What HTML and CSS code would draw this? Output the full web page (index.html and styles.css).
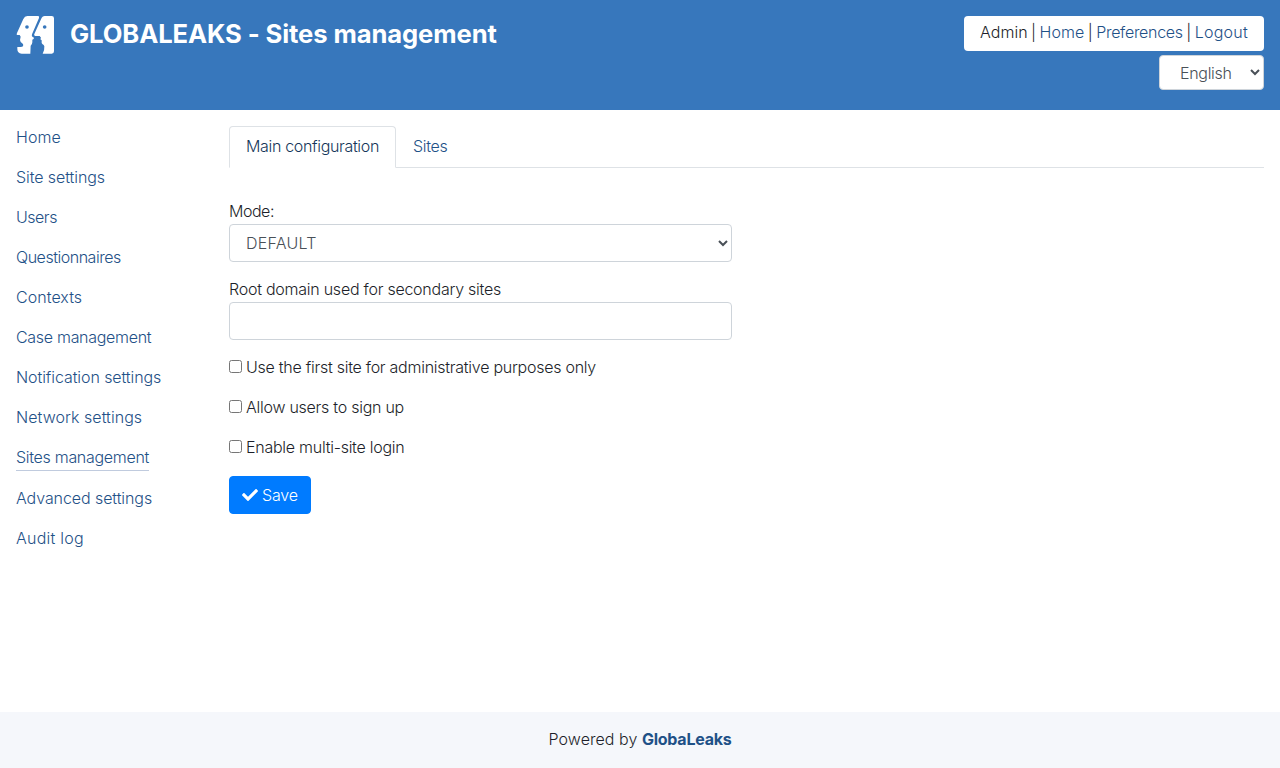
FILE: index.html
```html
<!DOCTYPE html>
<html lang="en">
<head>
<meta charset="utf-8">
<title>GLOBALEAKS - Sites management</title>
<link rel="stylesheet" href="styles.css">
</head>
<body>
<header class="header">
  <svg class="logo" viewBox="0 0 114 114" aria-hidden="true">
    <path fill="#fff" d="M34 0H66Q71 0 69 6L48 55Q46 61 50 63L54 65Q54 69 49 71V79Q49 84 44 89L43 113H17Q4 112 4 99V93H14Q24 93 21 84Q12 79 12 72L14 62L11 57H4Q0 57 3 51L22 9Q26 0 34 0Z"/>
    <path fill="#fff" d="M86 0H107Q114 0 114 7V106Q114 113 107 113H80Q86 104 85 91Q84 86 79 84Q76 81 77 73L73 70L75 65L71 60H62Q52 60 55 54L75 10Q79 0 86 0Z"/>
    <g fill="#3777bc"><circle cx="33" cy="33" r="5.5"/><circle cx="86" cy="33" r="5.5"/></g>
  </svg>
  <h1 class="title">GLOBALEAKS - Sites management</h1>
  <div class="tools">
    <div class="userbox"><span>Admin</span><i>|</i><a href="#">Home</a><i>|</i><a href="#" class="tight">Preferences</a><i>|</i><a href="#" class="wide">Logout</a></div>
    <select class="control language"><option>English</option></select>
  </div>
</header>
<div class="layout">
  <nav class="sidebar">
    <a href="#">Home</a>
    <a href="#" class="snug">Site settings</a>
    <a href="#" class="tighter">Users</a>
    <a href="#" class="tighter">Questionnaires</a>
    <a href="#">Contexts</a>
    <a href="#" class="tight">Case management</a>
    <a href="#" class="snug">Notification settings</a>
    <a href="#">Network settings</a>
    <a href="#" class="current tight">Sites management</a>
    <a href="#" class="snug">Advanced settings</a>
    <a href="#" class="wide">Audit log</a>
  </nav>
  <main class="content">
    <div class="tabs"><a href="#" class="tab active">Main configuration</a><a href="#" class="tab">Sites</a></div>
    <form class="form">
      <div class="field"><label for="mode" class="tighter">Mode:</label><select id="mode" class="control wide"><option>DEFAULT</option></select></div>
      <div class="field"><label for="root" class="root-label">Root domain used for secondary sites</label><input id="root" type="text" class="control"></div>
      <label class="check"><input type="checkbox"><span>Use the first site for administrative purposes only</span></label>
      <label class="check"><input type="checkbox"><span>Allow users to sign up</span></label>
      <label class="check"><input type="checkbox"><span>Enable multi-site login</span></label>
      <button type="button" class="save"><svg viewBox="0 0 512 512" aria-hidden="true"><path fill="currentColor" d="M173.9 439.4l-166.4-166.4c-10-10-10-26.2 0-36.2l36.2-36.2c10-10 26.2-10 36.2 0L192 312.7 432.1 72.6c10-10 26.2-10 36.2 0l36.2 36.2c10 10 10 26.2 0 36.2l-294.4 294.4c-10 10-26.2 10-36.2 0z"/></svg><span>Save</span></button>
    </form>
  </main>
</div>
<footer class="footer"><span>Powered by</span> <a href="#">GlobaLeaks</a></footer>
</body>
</html>
```
FILE: styles.css
```css
* { box-sizing: border-box; }
body {
  margin: 0;
  min-height: 100vh;
  display: flex;
  flex-direction: column;
  background: #fff;
  color: #1d1f2a;
  font: 350 16px/24px Inter, sans-serif;
  letter-spacing: 0.05px;
}
a { color: #1f5187; text-decoration: none; }
.header {
  display: flex;
  align-items: flex-start;
  height: 110px;
  padding: 16px;
  background: #3777bc;
}
.logo { width: 38px; height: 38px; }
.title {
  margin: 0 0 0 16px;
  color: #fff;
  font-size: 25.6px;
  line-height: 36px;
  font-weight: 650;
  letter-spacing: -0.1px;
  white-space: nowrap;
}
.tools {
  margin-left: auto;
  display: flex;
  flex-direction: column;
  align-items: flex-end;
  gap: 4px;
}
.userbox {
  display: flex;
  width: 300px;
  height: 35px;
  padding: 0 16px;
  line-height: 33px;
  white-space: nowrap;
  border-radius: 4px;
  background: #fff;
}
.userbox i { width: 12px; text-align: center; font-style: normal; font-weight: 300; }
.control {
  display: block;
  width: 100%;
  height: 38px;
  padding: 6px 12px;
  border: 1px solid #ced4da;
  border-radius: 4px;
  background: #fff;
  color: #495057;
  font: inherit;
  letter-spacing: inherit;
}
.language { width: 105px; height: 35px; padding: 4px 0 4px 16px; letter-spacing: -0.3px; }
.snug { letter-spacing: -0.08px; }
.tight { letter-spacing: -0.3px; }
.tighter { letter-spacing: -0.48px; }
.wide { letter-spacing: 0.25px; }
.root-label { letter-spacing: -0.25px; }
.layout { display: flex; flex: 1; }
.sidebar {
  flex: none;
  width: 229px;
  padding: 15px 0 0 16px;
  display: flex;
  flex-direction: column;
  align-items: flex-start;
  gap: 16px;
}
.current { margin-bottom: -1px; padding-bottom: 1px; border-bottom: 1px solid #c0cbde; }
.content { flex: 1; padding: 16px 16px 0 0; }
.tabs { display: flex; border-bottom: 1px solid #dee2e6; height: 42px; }
.tab { height: 42px; padding: 7px 16px 8px; border: 1px solid transparent; border-radius: 4px 4px 0 0; letter-spacing: -0.33px; }
.active { color: #15365a; border-color: #dee2e6 #dee2e6 #fff; background: #fff; }
.form { width: 503px; margin-top: 32px; }
.field { margin-bottom: 16px; }
.field label { display: block; height: 24px; line-height: 23px; }
.check { display: flex; align-items: flex-start; gap: 4px; height: 24px; margin-bottom: 16px; line-height: 23px; white-space: nowrap; letter-spacing: -0.26px; }
.check input { width: 13px; height: 13px; margin: 4px 0 0; }
.save {
  display: flex;
  align-items: center;
  gap: 4px;
  width: 82px;
  height: 38px;
  padding: 0 12px;
  border: 1px solid #007bff;
  border-radius: 4px;
  background: #007bff;
  color: #fff;
  font: inherit;
  letter-spacing: -0.2px;
}
.save svg { width: 16px; height: 16px; flex: none; }
.footer { height: 56px; padding-top: 15px; text-align: center; background: #f5f7fb; }
.footer a { font-weight: 700; letter-spacing: -0.25px; }
```
